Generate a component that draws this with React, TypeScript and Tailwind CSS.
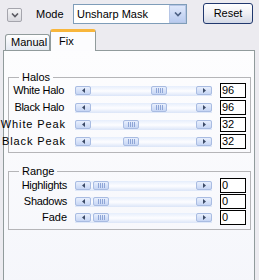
import React from "react";

const halos = [
  { label: "White Halo", value: "96", thumb: "ml-[60px]", pad: "pr-[3px] tracking-[-0.3px]" },
  { label: "Black Halo", value: "96", thumb: "ml-[60px]", pad: "pr-[3px] tracking-[-0.3px]" },
  { label: "White Peak", value: "32", thumb: "ml-[32px]", pad: "pr-[1px] tracking-[0.9px]" },
  { label: "Black Peak", value: "32", thumb: "ml-[32px]", pad: "pr-[1px] tracking-[0.9px]" },
];

const range = [
  { label: "Highlights", value: "0", thumb: "ml-[2px]", pad: "tracking-[-0.3px]" },
  { label: "Shadows", value: "0", thumb: "ml-[2px]", pad: "tracking-[-0.3px]" },
  { label: "Fade", value: "0", thumb: "ml-[2px]", pad: "" },
];

const Arrow = ({ dir }: { dir: "left" | "right" }) => (
  <svg width="5" height="5" viewBox="0 0 5 5">
    <path d={dir === "left" ? "M4 0 L1 2.5 L4 5 Z" : "M1 0 L4 2.5 L1 5 Z"} fill="#3c4a66" />
  </svg>
);

const ScrollBtn = ({ dir }: { dir: "left" | "right" }) => (
  <div className="w-[16px] h-[9px] shrink-0 rounded-[2px] border border-[#a9bce2] bg-linear-to-b from-[#e8effd] to-[#c7d6f4] flex items-center justify-center">
    <Arrow dir={dir} />
  </div>
);

const Scrollbar = ({ thumb }: { thumb: string }) => (
  <div className="w-[137px] h-[10px] flex items-center bg-linear-to-b from-[#e6eefc] via-[#fdfdff] to-[#dbe5f8]">
    <ScrollBtn dir="left" />
    {/* thumb with grip */}
    <div className={`w-[16px] h-[9px] shrink-0 rounded-[2px] border border-[#a9bce2] bg-linear-to-b from-[#e8effd] to-[#c7d6f4] flex items-center justify-center gap-[1px] ${thumb}`}>
      <span className="w-[1px] h-[5px] bg-[#8ea5d6]" />
      <span className="w-[1px] h-[5px] bg-[#8ea5d6]" />
      <span className="w-[1px] h-[5px] bg-[#8ea5d6]" />
      <span className="w-[1px] h-[5px] bg-[#8ea5d6]" />
    </div>
    <div className="flex-1" />
    <ScrollBtn dir="right" />
  </div>
);

type Row = { label: string; value: string; thumb: string; pad: string };

const SliderRow = ({ row }: { row: Row }) => (
  <div className="flex items-center h-[15px]">
    <div className={`w-[58px] flex justify-end whitespace-nowrap ${row.pad}`}>{row.label}</div>
    <div className="ml-[8px]">
      <Scrollbar thumb={row.thumb} />
    </div>
    <div className="ml-[8px] w-[26px] h-[15px] border border-black bg-white pl-[1px] leading-[13px]">
      {row.value}
    </div>
  </div>
);

const App = () => {
  return (
    <div className="w-[259px] h-[280px] overflow-hidden bg-[#ecebf0] text-[11px] text-black font-['Liberation_Sans',Arial,sans-serif]">
      {/* toolbar */}
      <div className="flex items-start h-[29px]">
        <div className="ml-[7px] mt-[8px] w-[15px] h-[14px] border border-[#a5a5ad] rounded-[2px] bg-linear-to-b from-[#f4f4f6] to-[#d9d9df] flex items-center justify-center">
          <svg width="8" height="5" viewBox="0 0 8 5">
            <path d="M1 0.5 L4 3.5 L7 0.5" stroke="#5a5a62" strokeWidth="1.6" fill="none" />
          </svg>
        </div>
        <div className="w-[51px] pl-[14px] mt-[8px] leading-[13px]">Mode</div>
        <div className="mt-[4px] w-[114px] h-[20px] border border-[#7f9db9] bg-white flex items-center">
          <span className="pl-[3px] flex-1 leading-[13px]">Unsharp Mask</span>
          <div className="w-[17px] h-[18px] border border-[#b6c6e6] bg-linear-to-b from-[#dfe8fb] to-[#b9cbef] flex items-center justify-center">
            <svg width="8" height="5" viewBox="0 0 8 5">
              <path d="M1 0.5 L4 3.5 L7 0.5" stroke="#4d6185" strokeWidth="1.6" fill="none" />
            </svg>
          </div>
        </div>
        <div className="ml-[16px] mt-[3px] w-[50px] h-[21px] rounded-[3px] border border-[#21386e] bg-linear-to-b from-[#ffffff] via-[#f0f0f4] to-[#d3d8e6] flex items-center justify-center">
          Reset
        </div>
      </div>

      {/* tabs */}
      <div className="flex items-end h-[21px] pl-[5px]">
        <div className="w-[45px] h-[16px] border border-b-0 border-[#919b9c] rounded-t-[3px] bg-linear-to-b from-[#ffffff] to-[#e4e8f1] pl-[5px] leading-[14px]">
          Manual
        </div>
        <div className="relative z-10 -mb-[1px] w-[46px] h-[22px] border-x border-[#919b9c] border-t-[3px] border-t-[#f8b63c] rounded-t-[3px] bg-[#fcfcfe] pl-[8px] pt-[2px] leading-[14px]">
          Fix
        </div>
      </div>

      {/* panel */}
      <div className="ml-[3px] w-[252px] h-[240px] border border-[#919b9c] bg-linear-to-b from-[#fdfdfe] to-[#f5f6fb]">
        <fieldset className="ml-[4px] mt-[19px] w-[243px] border border-[#b5b5b8] pb-[3px]">
          <legend className="ml-[10px] px-[3px] leading-[14px]">Halos</legend>
          <div className="flex flex-col gap-[2px] -mt-[1px]">
            {halos.map((r) => (
              <SliderRow key={r.label} row={r} />
            ))}
          </div>
        </fieldset>

        <fieldset className="ml-[4px] mt-[11px] w-[243px] border border-[#b5b5b8] pb-[4px]">
          <legend className="ml-[10px] px-[3px] leading-[14px]">Range</legend>
          <div className="flex flex-col gap-[1px]">
            {range.map((r) => (
              <SliderRow key={r.label} row={r} />
            ))}
          </div>
        </fieldset>
      </div>
    </div>
  );
};

export default App;
